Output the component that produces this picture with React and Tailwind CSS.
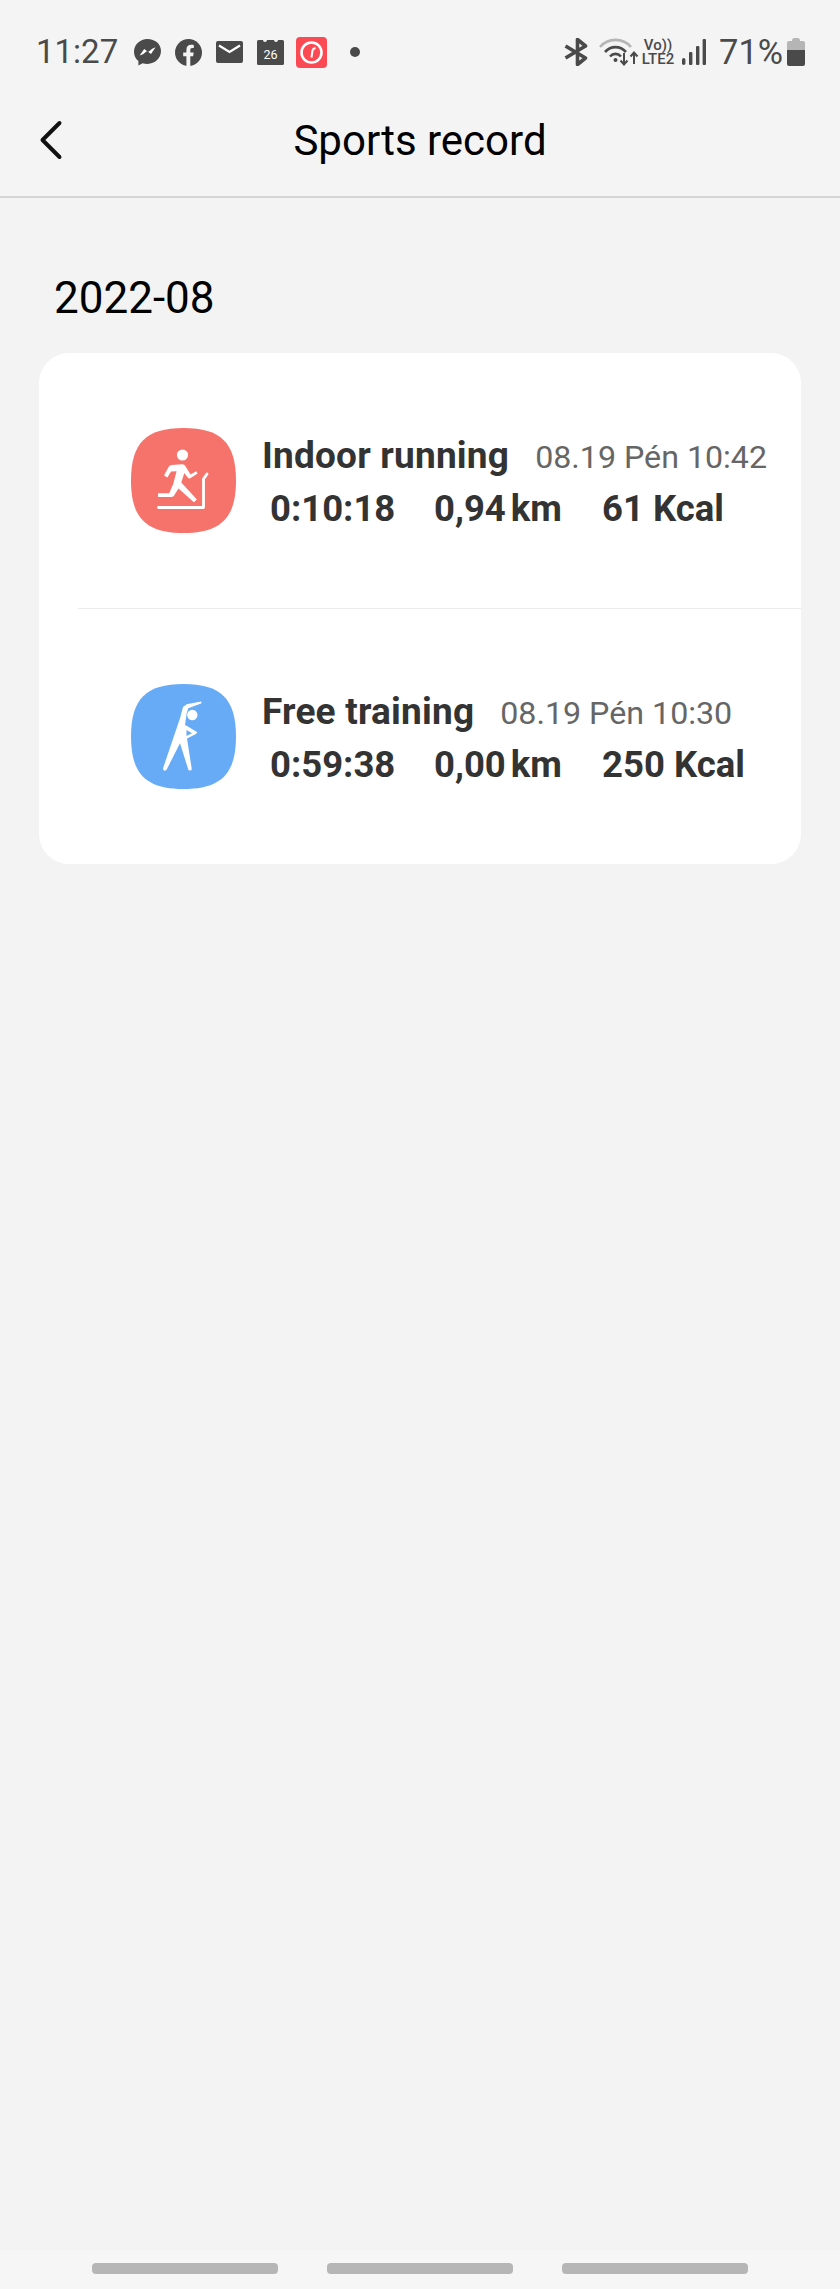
import { ChevronLeft } from 'lucide-react';

const SQUIRCLE = 'M52.5 0C90 0 105 15 105 52.5C105 90 90 105 52.5 105C15 105 0 90 0 52.5C0 15 15 0 52.5 0Z';

function RunIcon() {
  return (
    <svg viewBox="0 0 105 105" className="w-[105px] h-[105px] shrink-0">
      <path d={SQUIRCLE} fill="#f5736b" />
      <circle cx="51.5" cy="27" r="5.6" fill="#fff" />
      <path d="M33 47.5l4.6-8.6c.7-1.2 1.6-1.8 3-2l10.4-.6c1.800 0 3 .7 3.600 2.200l5 8 5.600-3.300 1.400 2.300-7 4.600c-1 .6-2 .4-2.700-.4l-3.600-4.600-3 9.500 15.600 17-3 2.600-15.400-13.600-4.400 7c-.6 1-1.400 1.400-2.600 1.400H27v-3.800h11.200l4-9.200 3.400-12.800-5.600.4-3.600 6z" fill="#fff" />
      <path d="M27.500 79.500H72.500V51L76 46" fill="none" stroke="#fff" strokeWidth="2.800" strokeLinecap="round" strokeLinejoin="round" />
    </svg>
  );
}

function StretchIcon() {
  return (
    <svg viewBox="0 0 105 105" className="w-[105px] h-[105px] shrink-0">
      <path d={SQUIRCLE} fill="#67abf6" />
      <circle cx="61.300" cy="31" r="5.200" fill="#fff" />
      <path
        fillRule="evenodd"
        fill="#fff"
        d="M70 17.500Q71 18.500 70 19.500L57.300 24.300 55.700 29.300 54 41 57.300 42.700 66.300 48.300 65 50 56 54.500 60.700 84.500Q61 86.500 59 86.500 57.500 86.500 57.300 85.500L49 59.300 35.700 85.500Q34.500 87 33 86.500 31.700 85.500 32.300 83.500L49 34.300 52 23 55.700 20.300Z M55.500 46L61 49.300 55.500 52Z"
      />
    </svg>
  );
}

function Messenger() {
  return (
    <svg viewBox="0 0 27 27" className="w-[27px] h-[27px] shrink-0">
      <path d="M13.500 0C6 0 0 5.600 0 12.800c0 3.800 1.600 7 4.400 9.300v4.400l4.200-2.300c1.500.4 3.200.7 4.900.7 7.500 0 13.500-5.600 13.500-12.800S21 0 13.500 0z" fill="#4a4a4a" />
      <path d="M5.600 16.600l4.600-6.600 4 3 4-3.200 3.400-1.600-4.600 6.800-4-3-4 3.200z" fill="#fff" />
    </svg>
  );
}

function Facebook() {
  return (
    <svg viewBox="0 0 27 27" className="w-[27px] h-[27px] shrink-0">
      <circle cx="13.500" cy="13.500" r="13.500" fill="#4a4a4a" />
      <path d="M11.400 27V17.200H8.200v-3.700h3.200v-2.800c0-3.200 1.900-4.900 4.700-4.900 1.400 0 2.700.2 2.700.2v3.100h-1.500c-1.500 0-2 .9-2 1.900v2.500h3.400l-.6 3.700h-2.800V27z" fill="#f4f4f4" />
    </svg>
  );
}

function Mail() {
  return (
    <svg viewBox="0 0 27 22" className="w-[27px] h-[22px] shrink-0">
      <rect width="27" height="22" rx="2" fill="#4a4a4a" />
      <path d="M3 4.500l10.500 6.500L24 4.500" fill="none" stroke="#fff" strokeWidth="2.200" />
    </svg>
  );
}

function CalendarIcon() {
  return (
    <svg viewBox="0 0 27 26" className="w-[27px] h-[26px] shrink-0">
      <path d="M1.500 1H6a2 2 0 0 0 4 0h7a2 2 0 0 0 4 0h4.500a1.500 1.500 0 0 1 1.500 1.500V24.500a1.500 1.500 0 0 1-1.500 1.500H1.500A1.500 1.500 0 0 1 0 24.500V2.500A1.500 1.500 0 0 1 1.500 1z" fill="#4a4a4a" />
      <text x="13.500" y="20" textAnchor="middle" fill="#fff" fontSize="12.500" fontFamily="Roboto, sans-serif">26</text>
    </svg>
  );
}

function RedClock() {
  return (
    <svg viewBox="0 0 31 31" className="w-[31px] h-[31px] shrink-0">
      <rect width="31" height="31" rx="4" fill="#fb4a54" />
      <circle cx="15.500" cy="15.500" r="10" fill="none" stroke="#fff" strokeWidth="2.600" />
      <path d="M15.500 20.500L16.500 13.500Q17 11.500 19.500 11" fill="none" stroke="#fff" strokeWidth="2" />
    </svg>
  );
}

function Bluetooth() {
  return (
    <svg viewBox="0 0 24 28" className="w-[24px] h-[28px] shrink-0">
      <path d="M1.500 8l20 12-8 6.500V1.500l8 6.500L1.500 20" fill="none" stroke="#4a4a4a" strokeWidth="3.600" strokeLinejoin="round" />
    </svg>
  );
}

function Wifi() {
  return (
    <svg viewBox="0 0 40 28" className="w-[40px] h-[28px] shrink-0">
      <path d="M1 9C9 -0.500 24 -0.500 32 9" fill="none" stroke="#b5b5b5" strokeWidth="2.600" />
      <path d="M6 14C12 7.500 21 7.500 27 14" fill="none" stroke="#4a4a4a" strokeWidth="2.600" />
      <path d="M11 18.500C14 15 19 15 22 18.500" fill="none" stroke="#4a4a4a" strokeWidth="2.600" />
      <circle cx="16.500" cy="22" r="2" fill="#4a4a4a" />
      <path d="M25 15V26M21.500 22.500L25 26.500L28.500 22.500" fill="none" stroke="#4a4a4a" strokeWidth="2" />
      <path d="M35 26V15M31.500 18.500L35 14.500L38.500 18.500" fill="none" stroke="#4a4a4a" strokeWidth="2" />
    </svg>
  );
}

function Signal() {
  return (
    <svg viewBox="0 0 24 26" className="w-[24px] h-[26px] shrink-0">
      <rect x="0" y="19" width="3.400" height="7" rx="1.700" fill="#4a4a4a" />
      <rect x="7" y="13" width="3.400" height="13" rx="1" fill="#4a4a4a" />
      <rect x="14" y="7" width="3.400" height="19" rx="1" fill="#4a4a4a" />
      <rect x="20.600" y="0" width="3.400" height="26" rx="1" fill="#4a4a4a" />
    </svg>
  );
}

function Battery() {
  return (
    <svg viewBox="0 0 18 28" className="w-[18px] h-[28px] shrink-0">
      <path d="M5 2.500Q5 0 7 0H11Q13 0 13 2.500V3H16Q18 3 18 5V12H0V5Q0 3 2 3H5Z" fill="#b5b5b5" />
      <path d="M0 12H18V26Q18 28 16 28H2Q0 28 0 26Z" fill="#4a4a4a" />
    </svg>
  );
}

function StatusBar() {
  return (
    <div className="h-[104px] flex items-center justify-between pl-[36px] pr-[35px] text-[#4a4a4a]">
      <div className="flex items-center">
        <span className="text-[33px] w-[98px]">11:27</span>
        <div className="flex items-center gap-[14px]">
          <Messenger />
          <Facebook />
          <Mail />
          <CalendarIcon />
          <div className="-ml-[2px]"><RedClock /></div>
        </div>
        <span className="ml-[23px] w-[10px] h-[10px] rounded-full bg-[#4a4a4a]" />
      </div>
      <div className="flex items-center">
        <Bluetooth />
        <div className="ml-[11px]"><Wifi /></div>
        <div className="ml-[1px] w-[36px] flex flex-col items-center font-medium text-[15px] leading-[14px]">
          <span>Vo))</span>
          <span>LTE2</span>
        </div>
        <div className="ml-[6px]"><Signal /></div>
        <span className="ml-[13px] text-[34.5px] leading-none w-[68px]">71%</span>
        <Battery />
      </div>
    </div>
  );
}

function RecordRow({ icon, title, date, time, distance, unit, calories }) {
  return (
    <div className="flex items-center pl-[92px] h-[255px]">
      {icon}
      <div className="ml-[26px] mt-[3px] text-[#333]">
        <div className="flex items-baseline leading-[51px]">
          <span className="text-[37px] font-bold tracking-[0.2px]">{title}</span>
          <span className="ml-[26px] text-[32.2px] text-[#666]">{date}</span>
        </div>
        <div className="flex text-[36.5px] font-bold leading-[51px] pl-[8px]">
          <span className="w-[164px]">{time}</span>
          <span className="w-[168px] flex gap-[5px]">
            <span>{distance}</span>
            <span>{unit}</span>
          </span>
          <span>{calories}</span>
        </div>
      </div>
    </div>
  );
}

export default function App() {
  return (
    <div className="w-[840px] h-[2289px] flex flex-col bg-[#f3f3f3] font-['Roboto',sans-serif] overflow-hidden">
      <div className="bg-[#f4f4f4] border-b-[2px] border-[#d4d4d4] h-[198px] shrink-0">
        <StatusBar />
        <div className="h-[92px] pb-[20px] grid grid-cols-[1fr_auto_1fr] items-center">
          <ChevronLeft className="ml-[17px]" size={68} strokeWidth={1.400} color="#111" />
          <span className="text-[42px] text-black">Sports record</span>
        </div>
      </div>

      <div className="flex-1 px-[39px]">
        <div className="pl-[15px] pt-[74px] h-[155px] text-[44px] leading-[52px] text-black">2022-08</div>
        <div className="bg-white rounded-[30px] h-[511px]">
          <RecordRow
            icon={<RunIcon />}
            title="Indoor running"
            date="08.19 Pén 10:42"
            time="0:10:18"
            distance="0,94"
            unit="km"
            calories="61 Kcal"
          />
          <div className="ml-[39px] h-[1px] bg-[#ececec]" />
          <RecordRow
            icon={<StretchIcon />}
            title="Free training"
            date="08.19 Pén 10:30"
            time="0:59:38"
            distance="0,00"
            unit="km"
            calories="250 Kcal"
          />
        </div>
      </div>

      <div className="h-[39px] shrink-0 bg-[#f6f6f6] flex justify-center gap-[49px] pt-[13px]">
        <span className="w-[186px] h-[11px] rounded-[4px] bg-[#b6b6b6]" />
        <span className="w-[186px] h-[11px] rounded-[4px] bg-[#b6b6b6]" />
        <span className="w-[186px] h-[11px] rounded-[4px] bg-[#b6b6b6]" />
      </div>
    </div>
  );
}
